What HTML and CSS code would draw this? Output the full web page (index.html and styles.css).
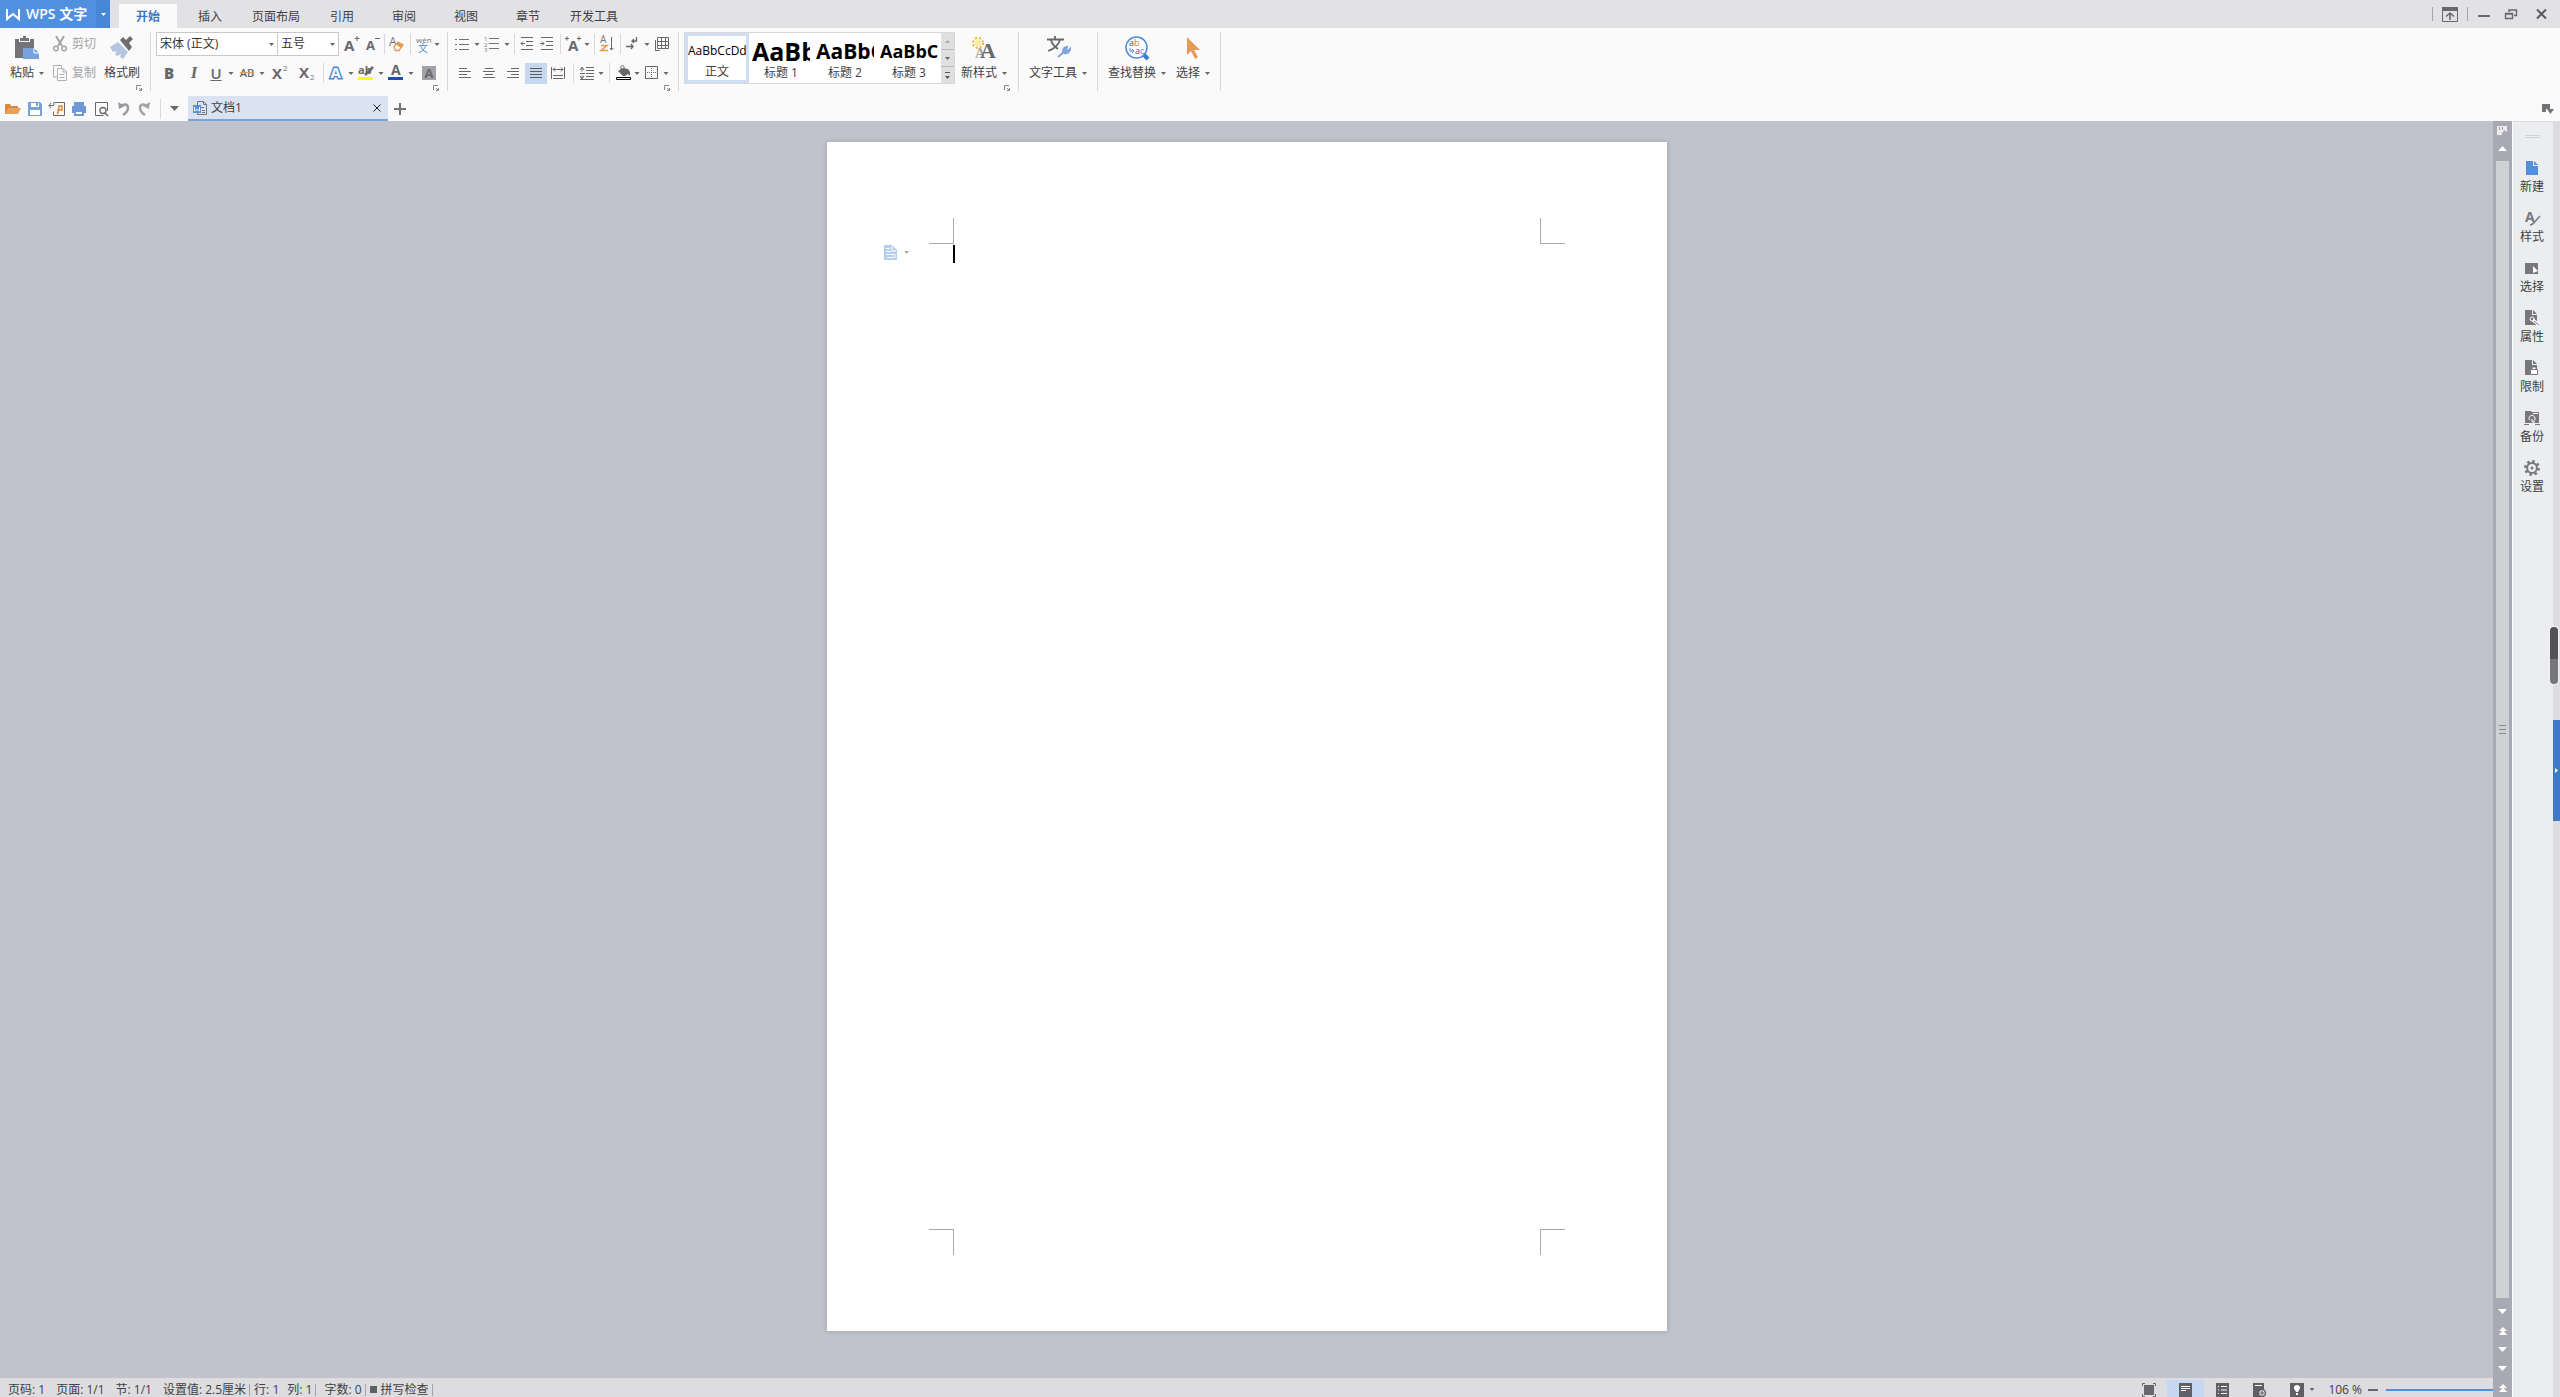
FILE: index.html
```html
<!DOCTYPE html>
<html lang="zh-CN">
<head>
<meta charset="utf-8">
<title>WPS 文字 - 文档1</title>
<link rel="stylesheet" href="styles.css">
</head>
<body>
<svg class="defs" aria-hidden="true">
  <symbol id="caret" viewBox="0 0 5 3"><path d="M0 0h5L2.500 3z" fill="currentColor"/></symbol>
  <symbol id="launch" viewBox="0 0 6 6"><path d="M.5 5V.5H5M3 5.500H5.500V3M3 3l2 2" fill="none" stroke="currentColor"/></symbol>
  <symbol id="down" viewBox="0 0 9 5"><path d="M0 0h9L4.500 5z" fill="currentColor"/></symbol>
  <symbol id="dup" viewBox="0 0 8 8"><path d="M4 0l4 4H0zM4 3l4 5H0z" fill="currentColor"/></symbol>
</svg>

<header class="titlebar">
  <button class="logo"><svg width="14" height="12" viewBox="0 0 14 12"><path d="M1 1v10l6-5 6 5V1" fill="none" stroke="#fff" stroke-width="2"/><path d="M1 11l3.500-4" stroke="#fff"/></svg>WPS 文字<span class="logo-menu"><svg class="caret"><use href="#caret"/></svg></span></button>
  <nav class="tabs">
    <button class="tab active">开始</button><button class="tab">插入</button><button class="tab long">页面布局</button><button class="tab">引用</button><button class="tab">审阅</button><button class="tab">视图</button><button class="tab">章节</button><button class="tab long">开发工具</button>
  </nav>
  <div class="window-controls">
    <button class="w-36 ruled" aria-label="隐藏功能区"><svg width="16" height="15" viewBox="0 0 16 15"><path d="M.5.500h15v14H.5z" fill="none" stroke="#68686c"/><path d="M0 0h16v4H0z" fill="#68686c"/><path d="M8 13V6M4 9.500L8 6l4 3.500" fill="none" stroke="#68686c" stroke-width="1.600"/></svg></button>
    <button class="w-32" aria-label="最小化"><svg width="12" height="12"><path d="M0 8h12" stroke="#68686c" stroke-width="2"/></svg></button>
    <button class="w-22" aria-label="还原"><svg width="12" height="11"><path d="M.500 4.500h7v5h-7zM.500 5h7M4 3V1h7.500v5.500H9" fill="none" stroke="#68686c" stroke-width="1.400"/></svg></button>
    <button class="w-42" aria-label="关闭"><svg width="11" height="10"><path d="M1 .500l9 9M10 .500l-9 9" stroke="#5c5c60" stroke-width="2"/></svg></button>
  </div>
</header>

<section class="ribbon" aria-label="开始">
  <div class="group clipboard">
    <button class="big paste"><svg width="24" height="24" viewBox="0 0 24 24"><path d="M0 3h4v3h11V3h4v9h-7v10H0z" fill="#747478"/><path d="M5 2h3V0h3v2h3v3H5z" fill="#747478"/><path d="M8 12h11l5 5v6H8z" fill="#78a1de"/><path d="M19 12v5h5" fill="none" stroke="#fff"/></svg><span>粘贴<svg class="caret"><use href="#caret"/></svg></span></button>
    <div class="stack">
      <button class="line muted"><svg width="14" height="16" viewBox="0 0 14 16"><path d="M3 0l6 10M11 0L5 10" stroke="#a3a3a6" stroke-width="2"/><circle cx="3" cy="12.500" r="2.300" fill="none" stroke="#a3a3a6" stroke-width="1.400"/><circle cx="11" cy="12.500" r="2.300" fill="none" stroke="#a3a3a6" stroke-width="1.400"/></svg>剪切</button>
      <button class="line muted"><svg width="14" height="16" viewBox="0 0 14 16"><path d="M4 12H.5V.500h8V3M4.500 3.500H10l3.500 3v9h-9zM10 3.500V7h3M6.500 9.500h5M6.500 12.500h5" fill="none" stroke="#b0b0b5"/></svg>复制</button>
    </div>
    <button class="big painter"><svg width="24" height="24" viewBox="0 0 24 24"><path d="M10 4l3-3 3 3 4-4 3 3-4 4 3 4-3 4z" fill="#6d6d71"/><path d="M8 6l10 10-5 7-3-2 1-3-4 2-2-2 2-3-4 1-3-5z" fill="#b4c6e2"/></svg><span>格式刷</span></button>
    <svg class="launch"><use href="#launch"/></svg>
  </div>

  <div class="group font">
    <div class="row">
      <label class="combo family"><select aria-label="字体"><option>宋体 (正文)</option></select><svg class="caret"><use href="#caret"/></svg></label>
      <label class="combo size"><select aria-label="字号"><option>五号</option></select><svg class="caret"><use href="#caret"/></svg></label>
      <button class="w-26" aria-label="增大字号"><svg class="i" viewBox="0 0 16 16"><text x="0" y="15" class="g" font-size="15">A</text><path d="M10.500 2.500h5M13 0v5" stroke="#68686c"/></svg></button>
      <button class="w-16" aria-label="减小字号"><svg class="i" viewBox="0 0 16 16"><text x="1" y="14" class="g" font-size="13">A</text><path d="M10 2.500h5" stroke="#68686c"/></svg></button>
      <i class="sep w-6"></i>
      <button class="w-20" aria-label="清除格式"><svg class="i" viewBox="0 0 16 16"><text x="0" y="10" class="gn" font-size="12">A</text><path d="M5 11l4-5 5 3-4 5.500H6.500z" fill="#fff" stroke="#e29b55" stroke-width="1.300"/><path d="M7 8.500l5 3.500 2-3-5-3z" fill="#e29b55"/></svg></button>
      <i class="sep w-6"></i>
      <button class="w-20" aria-label="拼音指南"><svg class="i" viewBox="0 0 16 16"><text x="1" y="7" class="gn" font-size="8">wén</text><text x="3" y="16" font-size="10" fill="#5790d8">文</text></svg></button>
      <svg class="caret in8"><use href="#caret"/></svg>
    </div>
    <div class="row">
      <button class="w-26 glyph"><b>B</b></button>
      <button class="w-24 glyph"><i class="italic">I</i></button>
      <button class="w-20 glyph"><u>U</u></button><svg class="caret in10"><use href="#caret"/></svg>
      <button class="w-22 glyph strike">AB</button><svg class="caret in8"><use href="#caret"/></svg>
      <button class="w-28" aria-label="上标"><svg class="i" viewBox="0 0 16 16"><text x="0" y="14" class="g" font-size="15">X</text><text x="11" y="6" class="gn" font-size="8">2</text></svg></button>
      <button class="w-26" aria-label="下标"><svg class="i" viewBox="0 0 16 16"><text x="0" y="13" class="g" font-size="15">X</text><text x="11" y="15" class="gn" font-size="8">2</text></svg></button>
      <i class="sep w-6"></i>
      <button class="w-20" aria-label="文字效果"><svg class="i" viewBox="0 0 16 16"><text x="2.500" y="13" font-size="15" font-weight="700" fill="#fff" stroke="#4f86d0" stroke-width="3" paint-order="stroke">A</text></svg></button><svg class="caret in10"><use href="#caret"/></svg>
      <button class="w-20" aria-label="突出显示"><svg class="i" viewBox="0 0 16 16"><text x="0" y="9" class="g" font-size="11">ab</text><path d="M7 10l8-8" stroke="#68686c" stroke-width="2.500"/><path d="M0 12h15v3H0z" fill="#ff0"/></svg></button><svg class="caret in10"><use href="#caret"/></svg>
      <button class="w-20" aria-label="字体颜色"><svg class="i" viewBox="0 0 16 16"><text x="3" y="10" class="g" font-size="14">A</text><path d="M0 12h15v3H0z" fill="#1c4fae"/></svg></button><svg class="caret in10"><use href="#caret"/></svg>
      <button class="w-26" aria-label="字符底纹"><svg class="i" viewBox="0 0 16 16"><path d="M1 1h14v14H1z" fill="#a1a1a7"/><text x="3.500" y="13" class="g" font-size="13">A</text></svg></button>
    </div>
    <svg class="launch"><use href="#launch"/></svg>
  </div>

  <div class="group para">
    <div class="row">
      <button class="w-22" aria-label="项目符号"><svg class="i" viewBox="0 0 16 16"><path d="M5 3.500h10M5 8.500h10M5 13.500h10M1 3.500h2M1 8.500h2M1 13.500h2" stroke="#747478" /></svg></button><svg class="caret in8"><use href="#caret"/></svg>
      <button class="w-22" aria-label="编号"><svg class="i" viewBox="0 0 16 16"><path d="M5 2.500h10M5 7.500h10M5 12.500h10" stroke="#747478"/><g class="gn" font-size="6"><text x="0" y="5">1</text><text x="0" y="10.500">2</text><text x="0" y="16">3</text></g></svg></button><svg class="caret in8"><use href="#caret"/></svg>
      <i class="sep w-6"></i>
      <button class="w-20" aria-label="减少缩进"><svg class="i" viewBox="0 0 16 16"><path d="M2 1.500h12M7 5.500h7M7 9.500h7M2 13.500h12M2 7.500h4M4 5.500l-2 2 2 2" fill="none" stroke="#68686c"/></svg></button>
      <button class="w-20" aria-label="增加缩进"><svg class="i" viewBox="0 0 16 16"><path d="M2 1.500h12M7 5.500h7M7 9.500h7M2 13.500h12M1 7.500h4M3 5.500l2 2-2 2" fill="none" stroke="#68686c"/></svg></button>
      <i class="sep w-6"></i>
      <button class="w-20" aria-label="中文版式"><svg class="i" viewBox="0 0 16 16"><text x="3" y="15" class="g" font-size="15">A</text><path d="M0 2.500h4M2 .500v4M12 2.500h4M14 .500v4" stroke="#68686c"/></svg></button><svg class="caret in8"><use href="#caret"/></svg>
      <i class="sep w-6"></i>
      <button class="w-20" aria-label="排序"><svg class="i" viewBox="0 0 16 16"><text x="1" y="7" class="gn" font-size="10">A</text><path d="M2 9.500h6l-6 5h7" fill="none" stroke="#e29b55" stroke-width="1.600"/><path d="M12.500 1v13M11 12l1.500 2 2-2" fill="none" stroke="#68686c"/></svg></button>
      <i class="sep w-6"></i>
      <button class="w-20" aria-label="显示标记"><svg class="i" viewBox="0 0 16 16"><path d="M11.500 1v4h-5M9 3L7 5l2 2M1 10.500h7M6 8l2 2.500L6 13" fill="none" stroke="#68686c" stroke-width="1.300"/></svg></button><svg class="caret in8"><use href="#caret"/></svg>
      <button class="w-22" aria-label="制表位"><svg class="i" viewBox="0 0 16 16"><path d="M3.500 1.500h11v11h-11zM7.500 1.500v11M11.500 1.500v11M3.500 5.500h11M3.500 9.500h11M1.500 15V4M1 14.500h5" fill="none" stroke="#68686c"/></svg></button>
    </div>
    <div class="row second">
      <button class="w-24" aria-label="左对齐"><svg class="i" viewBox="0 0 16 16"><path d="M2 3.500h8M2 6.500h12M2 9.500h8M2 12.500h12" stroke="#68686c"/></svg></button>
      <button class="w-24" aria-label="居中"><svg class="i" viewBox="0 0 16 16"><path d="M4 3.500h8M2 6.500h12M4 9.500h8M2 12.500h12" stroke="#68686c"/></svg></button>
      <button class="w-24" aria-label="右对齐"><svg class="i" viewBox="0 0 16 16"><path d="M6 3.500h8M2 6.500h12M6 9.500h8M2 12.500h12" stroke="#68686c"/></svg></button>
      <button class="w-22 on" aria-label="两端对齐"><svg class="i" viewBox="0 0 16 16"><path d="M2 3.500h12M2 6.500h12M2 9.500h12M2 12.500h12" stroke="#5c5c62"/></svg></button>
      <button class="w-22" aria-label="分散对齐"><svg class="i" viewBox="0 0 16 16"><path d="M1.500 2v12M14.500 2v12M3 4.500h10M5 2.500l-2 2 2 2M11 2.500l2 2-2 2M3 10.500h10M3 13.500h10" fill="none" stroke="#68686c"/></svg></button>
      <i class="sep w-8"></i>
      <button class="w-20" aria-label="行距"><svg class="i" viewBox="0 0 16 16"><path d="M7 2.500h8M7 5.500h8M7 8.500h8M1 8.500h5M7 11.500h8M1 14.500h14M3 2.500v4M3 10.500v3M1 5l2-3 2 3M1 11l2 3 2-3" fill="none" stroke="#68686c"/></svg></button><svg class="caret in8"><use href="#caret"/></svg>
      <i class="sep w-8"></i>
      <button class="w-20" aria-label="底纹颜色"><svg class="i" viewBox="0 0 16 16"><path d="M3 6l5-3 5 1 2 3v4l-2-2-3 2H8z" fill="#68686c"/><path d="M6 5V2c0-2 3-2 3 0v3" fill="none" stroke="#68686c"/><path d="M1.500 12.500h14v2h-14z" fill="#fff" stroke="#000"/></svg></button><svg class="caret in8"><use href="#caret"/></svg>
      <button class="w-20" aria-label="边框"><svg class="i" viewBox="0 0 16 16"><path d="M2.500 1.500h12v12h-12z" fill="none" stroke="#68686c"/><path d="M8.500 3v10M4 7.500h10" stroke="#68686c" stroke-dasharray="1 1"/></svg></button><svg class="caret in10"><use href="#caret"/></svg>
    </div>
    <svg class="launch"><use href="#launch"/></svg>
  </div>

  <div class="group styles">
    <div class="gallery">
      <button class="style chosen"><span class="sample">AaBbCcDd</span><span>正文</span></button>
      <button class="style"><span class="sample h1">AaBb</span><span>标题 1</span></button>
      <button class="style"><span class="sample h2">AaBbC</span><span>标题 2</span></button>
      <button class="style"><span class="sample h3">AaBbC</span><span>标题 3</span></button>
      <div class="gallery-nav">
        <button class="faded" aria-label="上一行"><svg class="caret flip"><use href="#caret"/></svg></button>
        <button aria-label="下一行"><svg class="caret"><use href="#caret"/></svg></button>
        <button aria-label="更多样式"><svg width="5" height="7"><path d="M0 .500h5" stroke="#55555a"/><path d="M0 4h5L2.500 7z" fill="#55555a"/></svg></button>
      </div>
    </div>
    <button class="big new-style"><svg width="24" height="24" viewBox="0 0 24 24"><text x="3" y="22" font-size="14" fill="#a5a5aa" class="serif">A</text><text x="8" y="22" font-size="22" fill="#68686c" class="serif">A</text><circle cx="6" cy="7" r="3" fill="#fbe9a0"/><circle cx="6" cy="7" r="5" fill="none" stroke="#efb23a" stroke-width="2" stroke-dasharray="2 2"/></svg><span>新样式<svg class="caret"><use href="#caret"/></svg></span></button>
    <svg class="launch"><use href="#launch"/></svg>
  </div>

  <div class="group tools">
    <button class="big"><svg width="24" height="24" viewBox="0 0 24 24"><path d="M1 3.500h17M9 0v3M14 4c-2 6-6 9-12 11M5 4c1 4 4 7 7 9" fill="none" stroke="#68686c" stroke-width="1.800"/><path d="M12 21l6-5M17 16c0-4 2-5 4-5l-1 3 2 1 2-2c0 3-3 5-6 4" fill="#7fa4dc" stroke="#7fa4dc" stroke-width="2"/></svg><span>文字工具<svg class="caret"><use href="#caret"/></svg></span></button>
  </div>

  <div class="group find">
    <button class="big"><svg width="24" height="24" viewBox="0 0 24 24"><path d="M19 19l4 4" stroke="#3b7bc8" stroke-width="4"/><circle cx="11.500" cy="11.500" r="10.500" fill="#fff" stroke="#4a8ad6" stroke-width="1.500"/><g font-size="9"><text x="4" y="10" fill="#555">a</text><text x="9" y="10" fill="#d07a32">b</text><text x="10" y="18" fill="#555">a</text><text x="15" y="18" fill="#4a8ad6">c</text></g><path d="M5 12v3h4M7 13l2 2-2 2" fill="none" stroke="#4a8ad6"/></svg><span>查找替换<svg class="caret"><use href="#caret"/></svg></span></button>
    <button class="big"><svg width="24" height="24" viewBox="0 0 24 24"><path d="M6 1v18l4-4 4 8 3-2-4-7h6z" fill="#e29b5b"/></svg><span>选择<svg class="caret"><use href="#caret"/></svg></span></button>
  </div>
</section>

<section class="quickbar">
  <div class="quick">
    <button aria-label="打开"><svg class="i" viewBox="0 0 16 16"><path d="M0 13V3h5l1 2h7v2H4L1 13z" fill="#d98a42"/><path d="M4 7h12l-3 6H1z" fill="#e8a05c"/></svg></button>
    <button aria-label="保存"><svg class="i" viewBox="0 0 16 16"><path d="M1 1h12l2 2v12H1z" fill="#78a1de"/><path d="M4 2h8v4H4zM3 9h10v5H3z" fill="#fff"/><path d="M9 2h2v3H9z" fill="#78a1de"/></svg></button>
    <button aria-label="输出为PDF"><svg class="i" viewBox="0 0 16 16"><path d="M5.500 1.500h10v13h-11v-4" fill="none" stroke="#68686c"/><path d="M0 4.500h5M2 2l-2 2.500L2 7M5 1v3" fill="none" stroke="#68686c"/><path d="M8 13c2-2 2-4 2-8h3v4H8" fill="none" stroke="#e08a3c" stroke-width="1.600"/></svg></button>
    <button aria-label="打印"><svg class="i" viewBox="0 0 16 16"><path d="M3 1h10v4h2v7H1V5h2z" fill="#6f98d4"/><path d="M4 5.500h8M4 10h8v4H4z" fill="#fff" stroke="#6f98d4" stroke-width="2"/></svg></button>
    <button aria-label="打印预览"><svg class="i" viewBox="0 0 16 16"><path d="M14.500 10V1.500h-12v13h8" fill="none" stroke="#68686c"/><circle cx="10" cy="9.500" r="3" fill="none" stroke="#68686c" stroke-width="1.300"/><path d="M12 12l3 3" stroke="#68686c" stroke-width="1.600"/></svg></button>
    <button aria-label="撤销"><svg class="i" viewBox="0 0 16 16"><path d="M3 1l1 7 6-3z" fill="#9b9ba0"/><path d="M5 6c4-4 8-3 8 1 0 3-2 5-5 7" fill="none" stroke="#9b9ba0" stroke-width="2.500"/></svg></button>
    <button aria-label="恢复"><svg class="i" viewBox="0 0 16 16"><path d="M13 1l-1 7-6-3z" fill="#a3a3a8"/><path d="M11 6C7 2 3 3 3 7c0 3 2 5 5 7" fill="none" stroke="#a3a3a8" stroke-width="2.500"/></svg></button>
  </div>
  <i class="sep"></i>
  <button class="more" aria-label="自定义"><svg width="9" height="5"><use href="#down"/></svg></button>
  <div class="doctab"><svg class="i" viewBox="0 0 16 16"><path d="M5.500 5V1.500h6l3 3v10h-9V12M11.500 1.500v3h3M8 7.500h4M10 10.500h3M10 12.500h3" fill="none" stroke="#747478"/><path d="M1 5h8v8H1z" fill="#5c90da"/><path d="M2.500 7v4L5 9.500 7.500 11V7" fill="none" stroke="#fff"/></svg><span>文档1</span><button aria-label="关闭文档"><svg width="8" height="8"><path d="M.500.500l7 7M7.500.500l-7 7" stroke="#222"/></svg></button></div>
  <button class="plus" aria-label="新建文档"><svg width="12" height="12"><path d="M0 6h12M6 0v12" stroke="#747478" stroke-width="2"/></svg></button>
  <button class="corner-menu" aria-label="文档标签菜单"><svg width="12" height="10"><path d="M0 0h8v3H4v5H0z" fill="#747478"/><path d="M4 3h4v2H4z" fill="#747478"/><path d="M5 5h7l-3.500 5z" fill="#747478"/></svg></button>
</section>

<main class="workspace">
  <div class="editor">
    <div class="canvas">
      <article class="page">
        <i class="mark tl"></i><i class="mark tr"></i><i class="mark bl"></i><i class="mark br"></i>
        <button class="page-hint" aria-label="段落布局"><svg width="13" height="15"><path d="M0 0h8l5 5v10H0z" fill="#b4cfee"/><path d="M2 3.500h4M2 6.500h5M8 1v5h4M2 9.500h9v3H3" fill="none" stroke="#fff"/></svg><svg class="caret"><use href="#caret"/></svg></button>
        <i class="cursor"></i>
      </article>
    </div>
    <footer class="status">
      <span class="st first">页码: 1</span><span class="st">页面: 1/1</span><span class="st">节: 1/1</span><span class="st">设置值: 2.5厘米</span><i class="bar"></i><span>行: 1</span><span class="st near">列: 1</span><i class="bar"></i><span class="st count">字数: 0</span><i class="bar"></i><button class="spell"><i></i>拼写检查</button><i class="bar"></i>
      <div class="views">
        <button aria-label="全屏显示"><svg width="14" height="14"><path d="M2 2h10v10H2z" fill="#68686c"/><path d="M.500 3V.500H3M11 .500h2.500V3M.500 11v2.500H3M11 13.500h2.500V11" fill="none" stroke="#68686c"/></svg></button>
        <button class="on" aria-label="页面视图"><svg width="13" height="14"><path d="M0 0h13v14H0z" fill="#606068"/><path d="M2 3.500h9M2 5.500h9M2 7.500h5" stroke="#fff"/></svg></button>
        <button aria-label="大纲视图"><svg width="13" height="14"><path d="M0 0h13v14H0z" fill="#606064"/><path d="M2 3.500h1M5 3.500h6M2 7h1M5 7h6M2 10.500h1M5 10.500h6" stroke="#fff"/></svg></button>
        <button aria-label="Web版式"><svg width="13" height="14"><path d="M0 0h11v14H0z" fill="#606064"/><path d="M2 2.500h7" stroke="#fff"/><circle cx="9" cy="10" r="3.500" fill="#ddd" stroke="#606064" stroke-width="1.500"/><path d="M7 10h4M9 8v4" stroke="#606064"/></svg></button>
        <button aria-label="护眼模式"><svg width="14" height="14"><path d="M0 0h14v14H0z" fill="#606064"/><path d="M7 2c-3 0-4 3-2 5l1 2h2l1-2c2-2 1-5-2-5M6 10h2v2H6z" fill="#fff"/></svg></button>
        <svg class="caret in8"><use href="#caret"/></svg>
      </div>
      <label class="zoom" for="zoom">106 %</label>
      <button class="minus" aria-label="缩小"><svg width="10" height="2"><path d="M0 1h10" stroke="#68686c" stroke-width="2"/></svg></button>
      <input class="slider" id="zoom" type="range" min="10" max="106" value="106">
    </footer>
  </div>
  <div class="scroll">
    <button class="ruler" aria-label="标尺"><svg width="11" height="10"><path d="M0 0h10v9H0z" fill="#ededf0"/><path d="M2.500 1v3M5.500 1v3" stroke="#9a9aa4"/><path d="M5 9V7l2.500-3L11 7v3H5z" fill="#a9a9b3"/></svg></button>
    <button class="up" aria-label="向上滚动"><svg width="9" height="5" class="flip"><use href="#down"/></svg></button>
    <div class="thumb"><i></i><i></i><i></i></div>
    <div class="ends">
      <button aria-label="向下滚动"><svg width="9" height="5"><use href="#down"/></svg></button>
      <button aria-label="上一页"><svg width="8" height="8"><use href="#dup"/></svg></button>
      <button aria-label="下一页"><svg width="9" height="5"><use href="#down"/></svg></button>
      <button aria-label="下一处"><svg width="9" height="5"><use href="#down"/></svg></button>
      <button aria-label="上一处"><svg width="8" height="8"><use href="#dup"/></svg></button>
    </div>
  </div>
  <aside class="side">
    <i class="grip"></i>
    <button><svg class="i" viewBox="0 0 16 16"><path d="M2 1h7v5h5v9H2zM10 1l4 4h-4z" fill="#5190df"/></svg>新建</button>
    <button><svg class="i" viewBox="0 0 16 16"><text x="1" y="12" class="gn" font-size="14" font-weight="700">A</text><path d="M6 15c4 0 4-3 10-9" fill="none" stroke="#77777c" stroke-width="1.500"/></svg>样式</button>
    <button><svg class="i" viewBox="0 0 16 16"><path d="M1 3h13v11H1z" fill="#77777c"/><path d="M9 6v7l5-2z" fill="#fff"/></svg>选择</button>
    <button><svg class="i" viewBox="0 0 16 16"><path d="M1 0h7v5h5v10H1zM9 0l4 4H9z" fill="#77777c"/><circle cx="8" cy="9" r="2" fill="none" stroke="#fff"/><path d="M9 10l6 5" stroke="#fff" stroke-width="3"/><path d="M10 11l5 4" stroke="#77777c"/></svg>属性</button>
    <button><svg class="i" viewBox="0 0 16 16"><path d="M1 0h7v5h5v10H1zM9 0l4 4H9z" fill="#77777c"/><path d="M6.500 9.500h7v5h-7zM8 9V7h4v2" fill="#fff" stroke="#77777c"/></svg>限制</button>
    <button><svg class="i" viewBox="0 0 16 16"><path d="M1 1h6l1 1h7v11H1zM0 14h5v1H0zM11 14h5v1h-5z" fill="#77777c"/><path d="M9 3.500h5" stroke="#fff"/><path d="M5.500 10a3 3 0 1 1 4 1M8 9v3h3" fill="none" stroke="#fff"/></svg>备份</button>
    <button><svg class="i" viewBox="0 0 16 16"><circle cx="8" cy="8" r="6.700" fill="none" stroke="#77777c" stroke-width="2.500" stroke-dasharray="2.600 2.660"/><circle cx="8" cy="8" r="4.900" fill="none" stroke="#77777c" stroke-width="2"/><circle cx="8" cy="8" r="1.500" fill="#77777c"/></svg>设置</button>
  </aside>
  <div class="edge"><i class="pill"></i><button class="drawer" aria-label="展开"><svg width="3" height="5"><path d="M0 0l3 2.500L0 5z" fill="#fff"/></svg></button></div>
</main>
</body>
</html>
```
FILE: styles.css
```css
* { box-sizing: border-box; }
html, body { height: 100%; }
body {
  margin: 0;
  display: flex;
  flex-direction: column;
  overflow: hidden;
  background: #fafafa;
  color: #404044;
  font: 12px/16px "Open Sans", "Noto Sans CJK SC", sans-serif;
}
button {
  margin: 0;
  padding: 0;
  border: 0;
  background: none;
  color: inherit;
  font: inherit;
  display: flex;
  align-items: center;
  justify-content: center;
  flex: none;
  white-space: nowrap;
}
svg { display: block; flex: none; overflow: visible; }
.defs { position: absolute; width: 0; height: 0; overflow: hidden; }
.i { width: 16px; height: 16px; }
.g { fill: #68686c; font-weight: 700; }
.gn { fill: #77777c; }
.serif { font-family: "Liberation Serif", serif; font-weight: 700; }
.caret { width: 5px; height: 3px; color: #68686c; }
.in8 { width: 8px; }
.in10 { width: 10px; }
.flip { transform: rotate(180deg); }
.w-6 { width: 6px; }
.w-8 { width: 8px; }
.w-16 { width: 16px; }
.w-20 { width: 20px; }
.w-22 { width: 22px; }
.w-24 { width: 24px; }
.w-26 { width: 26px; }
.w-28 { width: 28px; }
.w-32 { width: 32px; }
.w-36 { width: 36px; }
.w-42 { width: 38px; }

/* title bar */
.titlebar { display: flex; flex: none; height: 28px; background: #e2e2e4; }
.logo { position: relative; width: 110px; padding-left: 6px; justify-content: flex-start; gap: 6px; background: #5190df; color: #fff; font-size: 14px; font-weight: 600; }
.logo-menu { position: absolute; right: 0; top: 0; width: 14px; height: 28px; display: flex; align-items: center; justify-content: center; background: #4787d5; }
.logo-menu .caret { color: #fff; }
.tabs { display: flex; padding: 4px 0 0 9px; }
.tab { width: 62px; padding-top: 2px; }
.tab.long { width: 70px; }
.tab.active { width: 58px; margin-right: 2px; background: #fafafa; color: #3c76c2; font-weight: 700; }
.window-controls { display: flex; align-items: center; margin-left: auto; }
.window-controls button { height: 14px; }
.window-controls .ruled { border: solid #a5a5a9; border-width: 0 1px; }

/* ribbon */
.ribbon { display: flex; flex: none; height: 68px; padding: 4px 0 5px; }
.group { position: relative; display: flex; border-right: 1px solid #d8d8da; }
.launch { position: absolute; right: 8px; bottom: 0; width: 6px; height: 6px; color: #88888c; }
.sep { display: flex; justify-content: center; align-self: center; height: 20px; }
.sep::before { content: ""; width: 1px; background: #dadadc; }
.row { display: flex; align-items: center; height: 24px; }
.font, .para { flex-direction: column; gap: 5px; }
.clipboard { width: 151px; }
.big { flex-direction: column; justify-content: flex-start; padding-top: 4px; gap: 4px; }
.big span { display: flex; align-items: center; height: 18px; gap: 5px; }
.paste { width: 50px; padding-left: 4px; }
.stack { display: flex; flex-direction: column; gap: 5px; padding-left: 3px; }
.line { height: 24px; gap: 5px; }
.muted { color: #a3a3a6; }
.painter { width: 52px; }
.font { width: 297px; padding-left: 5px; }
.combo { position: relative; display: block; height: 24px; }
.combo.family { width: 122px; }
.combo.size { width: 62px; margin-left: -1px; }
.combo select { appearance: none; display: block; width: 100%; height: 24px; padding: 0 3px; border: 1px solid #c8c8ca; border-radius: 0; background: #fff; color: #333; font: inherit; }
.combo .caret { position: absolute; right: 4px; top: 11px; }
.glyph { color: #68686c; font-size: 15px; font-weight: 600; }
.glyph .italic { font-family: "Liberation Serif", serif; font-size: 17px; }
.strike { font-size: 11px; text-decoration: line-through #e29b55; }
.para { width: 231px; padding-left: 3px; }
.para .second { padding-left: 2px; }
.on { height: 21px; background: #c5d8ef; }
.styles { width: 340px; padding-left: 5px; }
.gallery { display: flex; height: 52px; border: 1px solid #d8d8da; background: #fff; }
.style { flex-direction: column; width: 64px; height: 50px; padding: 4px 3px 0; overflow: hidden; justify-content: flex-start; }
.style.chosen { border: 3px solid #cfdff3; padding: 1px 0 0; }
.sample { display: block; width: 58px; height: 28px; line-height: 28px; overflow: hidden; font-size: 12px; color: #000; text-align: left; }
.h1, .h2, .h3 { font-weight: 700; }
.h1 { font-size: 25px; }
.h2 { font-size: 21px; }
.h3 { font-size: 18px; }
.gallery-nav { display: flex; flex-direction: column; gap: 1px; width: 13px; background: #b8b8be; }
.gallery-nav button { flex: 1; background: #dfdfdf; }
.faded .caret { color: #aaaab0; }
.new-style { width: 62px; }
.new-style svg:first-child { margin-right: 4px; }
.tools { width: 79px; justify-content: center; }
.find { width: 123px; padding-left: 10px; gap: 10px; }

/* quick access and document tabs */
.quickbar { display: flex; flex: none; align-items: center; height: 25px; }
.quick { display: flex; gap: 6px; padding-left: 5px; }
.quickbar > .sep { margin-left: 7px; }
.more { width: 27px; color: #68686c; }
.doctab { display: flex; align-items: center; align-self: stretch; width: 200px; padding: 0 6px 0 4px; gap: 3px; border-bottom: 2px solid #79a2de; background: #dae3f2; }
.doctab button { width: 10px; margin-left: auto; }
.plus { width: 24px; }
.corner-menu { margin-left: auto; padding-right: 6px; }

/* workspace */
.workspace { display: flex; flex: 1; min-height: 0; }
.editor { display: flex; flex-direction: column; flex: 1; min-width: 0; }
.canvas { flex: 1; min-height: 0; overflow: hidden; padding-top: 21px; background: #c0c3cc; }
.page { position: relative; width: 840px; height: 1189px; margin: 0 auto; background: #fff; box-shadow: 0 0 4px 1px #a8abb6; }
.mark { position: absolute; width: 25px; height: 26px; border: 0 solid #a9a9af; }
.tl { left: 102px; top: 76px; border-width: 0 1px 1px 0; }
.tr { right: 102px; top: 76px; border-width: 0 0 1px 1px; }
.bl { left: 102px; bottom: 76px; border-width: 1px 1px 0 0; }
.br { right: 102px; bottom: 76px; border-width: 1px 0 0 1px; }
.page-hint { position: absolute; left: 57px; top: 103px; gap: 7px; }
.page-hint .caret { color: #a9a9b3; }
.cursor { position: absolute; left: 126px; top: 103px; width: 2px; height: 18px; background: #000; }

.status { display: flex; flex: none; align-items: center; height: 19px; padding-top: 4px; overflow: hidden; background: #dddddf; white-space: nowrap; }
.st { margin-left: 11px; }
.st.first { margin-left: 8px; }
.st.near { margin-left: 8px; }
.st.count { margin-left: 4px; }
.bar { width: 1px; height: 12px; margin: 0 4px 0 3px; background: #a5a5a9; }
.spell { gap: 4px; }
.spell i { width: 7px; height: 7px; background: #606064; }
.views { display: flex; align-items: center; margin-left: auto; }
.views button { width: 37px; height: 19px; }
.views .on { height: 19px; background: #c5d8ef; }
.views .in8 { margin-left: -7px; }
.zoom { margin-left: 12px; }
.minus { width: 22px; }
.slider { appearance: none; width: 107px; height: 2px; margin: 0 0 0 2px; background: #5190df; }
.slider::-webkit-slider-thumb { appearance: none; width: 1px; height: 2px; background: #5190df; }

.scroll { display: flex; flex-direction: column; flex: none; width: 19px; background: #a9a9b3; color: #fff; }
.scroll button { width: 19px; height: 19px; }
.scroll .up { height: 21px; padding-bottom: 4px; }
.thumb { display: flex; flex: 1; flex-direction: column; align-items: center; justify-content: center; gap: 3px; margin: 0 3px; background: #d0d1d5; }
.thumb i { width: 7px; height: 1px; background: #88888e; }
.ends { display: flex; flex-direction: column; padding-top: 4px; }

.side { display: flex; flex: none; flex-direction: column; align-items: center; width: 41px; padding-right: 2px; border-left: 1px solid #fff; border-top: 1px solid #dddddf; background: #ebedef; }
.grip { width: 15px; height: 3px; margin: 13px 0 17px; border: solid #d2d2d4; border-width: 1px 0; }
.side button { flex-direction: column; justify-content: flex-start; height: 50px; padding-top: 5px; gap: 3px; }
.edge { position: relative; flex: none; width: 7px; background: #dddddf; }
.pill { position: absolute; left: -3px; top: 506px; width: 8px; height: 57px; border-radius: 4px; background: linear-gradient(#525256 56%, #77777b 56%); box-shadow: 0 0 2px 1px #f4f4f4; }
.drawer { position: absolute; left: 0; top: 599px; width: 7px; height: 101px; background: #3d79c4; }
```
